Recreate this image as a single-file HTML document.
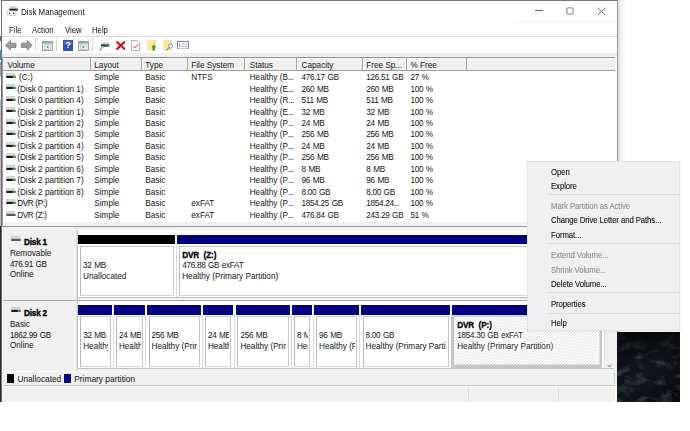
<!DOCTYPE html>
<html><head><meta charset="utf-8"><style>
html,body{margin:0;padding:0}
body{width:690px;height:431px;overflow:hidden;background:#fff;position:relative;font-family:"Liberation Sans", sans-serif}
.a{position:absolute}
.t{position:absolute;white-space:pre;color:#000;font-family:"Liberation Sans", sans-serif;-webkit-text-stroke:0px currentColor}
</style></head><body>
<div class="a" style="left:0px;top:36px;width:1.5px;height:5px;background:#2a7fc4"></div>
<div class="a" style="left:0px;top:50px;width:1.5px;height:10px;background:#3a8ad0"></div>
<div class="a" style="left:0px;top:62px;width:1.5px;height:14px;background:#9aa0a8"></div>
<div class="a" style="left:0px;top:100px;width:1.5px;height:126px;background:#b8bcc2"></div>
<div class="a" style="left:0px;top:226px;width:1.5px;height:176px;background:#22252b"></div>
<div class="a" style="left:1px;top:0px;width:1px;height:402px;background:#6e6e6e"></div>
<div class="a" style="left:1px;top:0px;width:616px;height:1px;background:#7a7a7a"></div>
<div class="a" style="left:617px;top:0px;width:1px;height:402px;background:#999"></div>
<div class="a" style="left:618px;top:0px;width:9px;height:402px;background:linear-gradient(90deg,rgba(0,0,0,0.13),rgba(0,0,0,0.04) 40%,rgba(0,0,0,0))"></div>
<div class="a" style="left:2px;top:1px;width:615px;height:401px;background:#fff"></div>
<div class="a" style="left:615px;top:37px;width:2px;height:365px;background:#fff"></div>
<svg class="a" style="left:7px;top:6px" width="11" height="10" viewBox="0 0 11 10">
<rect x="2.9" y="0.2" width="6.7" height="2" fill="#d0d0d0"/>
<rect x="2.4" y="2.6" width="8.3" height="2.2" fill="#1c2620"/>
<rect x="8.9" y="2.8" width="1.6" height="1.8" fill="#2f6a35"/>
<rect x="0.5" y="5" width="8.4" height="4.6" fill="#fbfbfb" stroke="#b8b8b8" stroke-width="0.6"/>
<circle cx="2.6" cy="7.2" r="0.75" fill="#111"/>
<circle cx="6.7" cy="7.2" r="0.75" fill="#111"/>
</svg>
<div class="t" style="left:20.8px;top:7.00px;font-size:8.7px;line-height:10px;color:#141414;transform:scaleX(0.91);transform-origin:0 0">Disk Management</div>
<div class="a" style="left:535px;top:10.4px;width:7.5px;height:0.8px;background:#666"></div>
<svg class="a" style="left:565.5px;top:7.2px" width="8" height="8" viewBox="0 0 8 8"><rect x="0.9" y="0.9" width="6.2" height="6.2" rx="0.6" fill="none" stroke="#666" stroke-width="0.85"/></svg>
<svg class="a" style="left:597px;top:7px" width="9" height="9" viewBox="0 0 9 9"><path d="M0.8 0.8L8.2 8.2M8.2 0.8L0.8 8.2" stroke="#666" stroke-width="0.85"/></svg>
<div class="a" style="left:513px;top:21px;width:103px;height:1px;background:#f2f2f2"></div>
<div class="t" style="left:9.1px;top:25.00px;font-size:8.6px;line-height:10px;color:#141414;transform:scaleX(0.9);transform-origin:0 0">File</div>
<div class="t" style="left:32.2px;top:25.00px;font-size:8.6px;line-height:10px;color:#141414;transform:scaleX(0.9);transform-origin:0 0">Action</div>
<div class="t" style="left:65.2px;top:25.00px;font-size:8.6px;line-height:10px;color:#141414;transform:scaleX(0.9);transform-origin:0 0">View</div>
<div class="t" style="left:92px;top:25.00px;font-size:8.6px;line-height:10px;color:#141414;transform:scaleX(0.9);transform-origin:0 0">Help</div>
<div class="a" style="left:2px;top:36px;width:615px;height:1px;background:#dcdcdc"></div>
<div class="a" style="left:2px;top:53px;width:615px;height:4px;background:#f0f0f0"></div>

<svg class="a" style="left:5px;top:40px" width="28" height="11" viewBox="0 0 28 11">
 <path d="M0.5 5.3 L5.5 0.5 L5.5 3.3 L11 3.3 L11 7.4 L5.5 7.4 L5.5 10.2 Z" fill="#9c9c9c" stroke="#6e6e6e" stroke-width="0.7" stroke-linejoin="round"/>
 <path d="M27.3 5.3 L22.3 0.5 L22.3 3.3 L16.3 3.3 L16.3 7.4 L22.3 7.4 L22.3 10.2 Z" fill="#9c9c9c" stroke="#6e6e6e" stroke-width="0.7" stroke-linejoin="round"/>
</svg>
<div class="a" style="left:35px;top:38px;width:1px;height:13px;background:#dadada"></div>
<svg class="a" style="left:42px;top:41px" width="11" height="10" viewBox="0 0 11 10">
 <rect x="0.5" y="0.5" width="10" height="9" fill="#e9eef3" stroke="#8a9099" stroke-width="0.8"/>
 <rect x="0.5" y="0.5" width="10" height="2" fill="#9aa3ad"/>
 <rect x="3" y="3.5" width="5.5" height="5" fill="#fff" stroke="#a0a8b0" stroke-width="0.5"/>
 <path d="M4.2 6 L6.5 4.3 L6.5 7.7 Z" fill="#3aa648"/>
</svg>
<div class="a" style="left:56px;top:38px;width:1px;height:13px;background:#dadada"></div>
<svg class="a" style="left:63px;top:39.5px" width="10" height="11" viewBox="0 0 10 11">
 <rect x="0.3" y="0.3" width="9.4" height="10.4" fill="#2f50b8" stroke="#1b2f7a" stroke-width="0.6"/>
 <rect x="1" y="1" width="8" height="4" fill="#5b7fdc" opacity="0.6"/>
 <text x="5" y="8.4" font-family="Liberation Sans" font-size="8.5" font-weight="bold" fill="#fff" text-anchor="middle">?</text>
</svg>
<svg class="a" style="left:78px;top:41px" width="11" height="10" viewBox="0 0 11 10">
 <rect x="0.5" y="0.5" width="10" height="9" fill="#e9eef3" stroke="#8a9099" stroke-width="0.8"/>
 <rect x="0.5" y="0.5" width="10" height="2" fill="#9aa3ad"/>
 <rect x="2.5" y="3.5" width="5.5" height="5" fill="#fff" stroke="#a0a8b0" stroke-width="0.5"/>
 <path d="M6.8 6 L4.5 4.3 L4.5 7.7 Z" fill="#3aa648"/>
</svg>
<div class="a" style="left:92px;top:38px;width:1px;height:13px;background:#dadada"></div>
<svg class="a" style="left:99px;top:41.5px" width="11" height="9.5" viewBox="0 0 11 9.5">
 <rect x="2.5" y="0.3" width="7.5" height="2" fill="#cfd6dc"/>
 <rect x="2" y="2.2" width="8.3" height="2.6" fill="#2f4a56"/>
 <rect x="7.6" y="2.5" width="2.4" height="2" fill="#2c9a3c"/>
 <path d="M3.6 4.6 L0.8 8.8" stroke="#7f98a8" stroke-width="1.2"/>
 <rect x="2.4" y="4.3" width="2.4" height="1.6" fill="#aac4d4"/>
</svg>
<svg class="a" style="left:115.5px;top:40.5px" width="9.5" height="9" viewBox="0 0 9.5 9">
 <path d="M1.3 1.2 L8.2 7.8 M8.2 1.2 L1.3 7.8" stroke="#c8101a" stroke-width="2.1" stroke-linecap="square"/>
</svg>
<svg class="a" style="left:131px;top:39.5px" width="9" height="11" viewBox="0 0 9 11">
 <path d="M0.5 0.5 H6 L8.5 3 V10.5 H0.5 Z" fill="#fafafa" stroke="#9a9a9a" stroke-width="0.7"/>
 <path d="M2 6.3 L3.6 8 L7 4.2" stroke="#e04a2a" stroke-width="1" fill="none"/>
</svg>
<svg class="a" style="left:147px;top:39.8px" width="10" height="11" viewBox="0 0 10 11">
 <rect x="0.2" y="0.2" width="8.2" height="10.4" fill="#fbe49a"/>
 <rect x="7.4" y="0.2" width="1" height="10.4" fill="#e8cf7a"/>
 <path d="M6.7 4.8 L4.3 7.2 H5.6 V10.4 H7.8 V7.2 H9.2 Z" fill="#1f9a2a"/>
</svg>
<svg class="a" style="left:162.6px;top:39.8px" width="11" height="11" viewBox="0 0 11 11">
 <rect x="0.2" y="0.2" width="8.2" height="10.4" fill="#fbe49a"/>
 <rect x="7.4" y="0.2" width="1" height="10.4" fill="#e8cf7a"/>
 <circle cx="7.6" cy="6" r="2.1" fill="#e6f0f8" stroke="#7f9cb0" stroke-width="0.9"/>
 <path d="M6 7.6 L3.2 10.5" stroke="#555" stroke-width="1"/>
</svg>
<svg class="a" style="left:176.5px;top:40.8px" width="12" height="8.5" viewBox="0 0 12 8.5">
 <rect x="0.5" y="0.5" width="11" height="7.5" fill="#fdfdfd" stroke="#707880" stroke-width="0.9"/>
 <path d="M2.3 2.3 L3.2 3.4 L2.4 4.8 L3.4 6" stroke="#4a86c0" stroke-width="0.8" fill="none"/>
 <rect x="5" y="2.6" width="5" height="0.8" fill="#9aa2aa"/>
 <rect x="5" y="5" width="5" height="0.8" fill="#9aa2aa"/>
</svg>

<div class="a" style="left:2px;top:57px;width:613px;height:1px;background:#8c8c8c"></div>
<div class="a" style="left:2px;top:57px;width:1px;height:170px;background:#9a9a9a"></div>
<div class="a" style="left:3px;top:58px;width:612px;height:12px;background:#f0f0f0"></div>
<div class="a" style="left:3px;top:70px;width:612px;height:1px;background:#9a9a9a"></div>
<div class="a" style="left:3px;top:58px;width:612px;height:1px;background:#fcfcfc"></div>
<div class="a" style="left:90px;top:58px;width:1px;height:12px;background:#a4a4a4"></div>
<div class="a" style="left:91px;top:58px;width:1px;height:12px;background:#fcfcfc"></div>
<div class="a" style="left:141px;top:58px;width:1px;height:12px;background:#a4a4a4"></div>
<div class="a" style="left:142px;top:58px;width:1px;height:12px;background:#fcfcfc"></div>
<div class="a" style="left:187px;top:58px;width:1px;height:12px;background:#a4a4a4"></div>
<div class="a" style="left:188px;top:58px;width:1px;height:12px;background:#fcfcfc"></div>
<div class="a" style="left:244px;top:58px;width:1px;height:12px;background:#a4a4a4"></div>
<div class="a" style="left:245px;top:58px;width:1px;height:12px;background:#fcfcfc"></div>
<div class="a" style="left:296px;top:58px;width:1px;height:12px;background:#a4a4a4"></div>
<div class="a" style="left:297px;top:58px;width:1px;height:12px;background:#fcfcfc"></div>
<div class="a" style="left:362px;top:58px;width:1px;height:12px;background:#a4a4a4"></div>
<div class="a" style="left:363px;top:58px;width:1px;height:12px;background:#fcfcfc"></div>
<div class="a" style="left:406px;top:58px;width:1px;height:12px;background:#a4a4a4"></div>
<div class="a" style="left:407px;top:58px;width:1px;height:12px;background:#fcfcfc"></div>
<div class="a" style="left:466px;top:58px;width:1px;height:12px;background:#a4a4a4"></div>
<div class="a" style="left:467px;top:58px;width:1px;height:12px;background:#fcfcfc"></div>
<div class="t" style="left:7.4px;top:60.99px;font-size:8.2px;line-height:10px;color:#141414">Volume</div>
<div class="t" style="left:94.3px;top:60.99px;font-size:8.2px;line-height:10px;color:#141414">Layout</div>
<div class="t" style="left:145.3px;top:60.99px;font-size:8.2px;line-height:10px;color:#141414">Type</div>
<div class="t" style="left:191.3px;top:60.99px;font-size:8.2px;line-height:10px;color:#141414">File System</div>
<div class="t" style="left:249.7px;top:60.99px;font-size:8.2px;line-height:10px;color:#141414">Status</div>
<div class="t" style="left:301.6px;top:60.99px;font-size:8.2px;line-height:10px;color:#141414">Capacity</div>
<div class="t" style="left:366.3px;top:60.99px;font-size:8.2px;line-height:10px;color:#141414">Free Sp...</div>
<div class="t" style="left:410.4px;top:60.99px;font-size:8.2px;line-height:10px;color:#141414">% Free</div>
<div class="a" style="left:16.3px;top:198.3px;width:31.5px;height:10.2px;background:#f3f3f3"></div>
<svg class="a" style="left:5.5px;top:73.00px" width="10" height="6" viewBox="0 0 10 6"><rect x="0.5" y="0.4" width="8.2" height="2.4" fill="#dadde1" stroke="#b4b9bf" stroke-width="0.5"/><rect x="0.3" y="2.9" width="9.2" height="2.1" fill="#1a1a1a"/><rect x="7" y="3.1" width="2.2" height="1.7" fill="#168a2a" stroke="#6cc86c" stroke-width="0.4"/></svg>
<div class="t" style="left:19.1px;top:73.09px;font-size:8.2px;line-height:10px;color:#141414">(C:)</div>
<div class="t" style="left:94.3px;top:73.09px;font-size:8.2px;line-height:10px;color:#141414">Simple</div>
<div class="t" style="left:145.3px;top:73.09px;font-size:8.2px;line-height:10px;color:#141414">Basic</div>
<div class="t" style="left:191.3px;top:73.09px;font-size:8.2px;line-height:10px;color:#141414">NTFS</div>
<div class="t" style="left:249.7px;top:73.09px;font-size:8.2px;line-height:10px;color:#141414">Healthy (B<span style="letter-spacing:-0.5px">...</span></div>
<div class="t" style="left:301.6px;top:73.09px;font-size:8.2px;line-height:10px;color:#141414;letter-spacing:-0.3px;word-spacing:0.6px">476.17 GB</div>
<div class="t" style="left:366.3px;top:73.09px;font-size:8.2px;line-height:10px;color:#141414;letter-spacing:-0.3px;word-spacing:0.6px">126.51 GB</div>
<div class="t" style="left:410.4px;top:73.09px;font-size:8.2px;line-height:10px;color:#141414;letter-spacing:-0.3px;word-spacing:0.6px">27 %</div>
<svg class="a" style="left:5.5px;top:84.47px" width="10" height="6" viewBox="0 0 10 6"><rect x="0.5" y="0.4" width="8.2" height="2.4" fill="#dadde1" stroke="#b4b9bf" stroke-width="0.5"/><rect x="0.3" y="2.9" width="9.2" height="2.1" fill="#1a1a1a"/><rect x="7" y="3.1" width="2.2" height="1.7" fill="#168a2a" stroke="#6cc86c" stroke-width="0.4"/></svg>
<div class="t" style="left:17.2px;top:84.56px;font-size:8.2px;line-height:10px;color:#141414">(Disk 0 partition 1)</div>
<div class="t" style="left:94.3px;top:84.56px;font-size:8.2px;line-height:10px;color:#141414">Simple</div>
<div class="t" style="left:145.3px;top:84.56px;font-size:8.2px;line-height:10px;color:#141414">Basic</div>
<div class="t" style="left:249.7px;top:84.56px;font-size:8.2px;line-height:10px;color:#141414">Healthy (E<span style="letter-spacing:-0.5px">...</span></div>
<div class="t" style="left:301.6px;top:84.56px;font-size:8.2px;line-height:10px;color:#141414;letter-spacing:-0.3px;word-spacing:0.6px">260 MB</div>
<div class="t" style="left:366.3px;top:84.56px;font-size:8.2px;line-height:10px;color:#141414;letter-spacing:-0.3px;word-spacing:0.6px">260 MB</div>
<div class="t" style="left:410.4px;top:84.56px;font-size:8.2px;line-height:10px;color:#141414;letter-spacing:-0.3px;word-spacing:0.6px">100 %</div>
<svg class="a" style="left:5.5px;top:95.94px" width="10" height="6" viewBox="0 0 10 6"><rect x="0.5" y="0.4" width="8.2" height="2.4" fill="#dadde1" stroke="#b4b9bf" stroke-width="0.5"/><rect x="0.3" y="2.9" width="9.2" height="2.1" fill="#1a1a1a"/><rect x="7" y="3.1" width="2.2" height="1.7" fill="#168a2a" stroke="#6cc86c" stroke-width="0.4"/></svg>
<div class="t" style="left:17.2px;top:96.03px;font-size:8.2px;line-height:10px;color:#141414">(Disk 0 partition 4)</div>
<div class="t" style="left:94.3px;top:96.03px;font-size:8.2px;line-height:10px;color:#141414">Simple</div>
<div class="t" style="left:145.3px;top:96.03px;font-size:8.2px;line-height:10px;color:#141414">Basic</div>
<div class="t" style="left:249.7px;top:96.03px;font-size:8.2px;line-height:10px;color:#141414">Healthy (R<span style="letter-spacing:-0.5px">...</span></div>
<div class="t" style="left:301.6px;top:96.03px;font-size:8.2px;line-height:10px;color:#141414;letter-spacing:-0.3px;word-spacing:0.6px">511 MB</div>
<div class="t" style="left:366.3px;top:96.03px;font-size:8.2px;line-height:10px;color:#141414;letter-spacing:-0.3px;word-spacing:0.6px">511 MB</div>
<div class="t" style="left:410.4px;top:96.03px;font-size:8.2px;line-height:10px;color:#141414;letter-spacing:-0.3px;word-spacing:0.6px">100 %</div>
<svg class="a" style="left:5.5px;top:107.41px" width="10" height="6" viewBox="0 0 10 6"><rect x="0.5" y="0.4" width="8.2" height="2.4" fill="#dadde1" stroke="#b4b9bf" stroke-width="0.5"/><rect x="0.3" y="2.9" width="9.2" height="2.1" fill="#1a1a1a"/><rect x="7" y="3.1" width="2.2" height="1.7" fill="#168a2a" stroke="#6cc86c" stroke-width="0.4"/></svg>
<div class="t" style="left:17.2px;top:107.50px;font-size:8.2px;line-height:10px;color:#141414">(Disk 2 partition 1)</div>
<div class="t" style="left:94.3px;top:107.50px;font-size:8.2px;line-height:10px;color:#141414">Simple</div>
<div class="t" style="left:145.3px;top:107.50px;font-size:8.2px;line-height:10px;color:#141414">Basic</div>
<div class="t" style="left:249.7px;top:107.50px;font-size:8.2px;line-height:10px;color:#141414">Healthy (E<span style="letter-spacing:-0.5px">...</span></div>
<div class="t" style="left:301.6px;top:107.50px;font-size:8.2px;line-height:10px;color:#141414;letter-spacing:-0.3px;word-spacing:0.6px">32 MB</div>
<div class="t" style="left:366.3px;top:107.50px;font-size:8.2px;line-height:10px;color:#141414;letter-spacing:-0.3px;word-spacing:0.6px">32 MB</div>
<div class="t" style="left:410.4px;top:107.50px;font-size:8.2px;line-height:10px;color:#141414;letter-spacing:-0.3px;word-spacing:0.6px">100 %</div>
<svg class="a" style="left:5.5px;top:118.88px" width="10" height="6" viewBox="0 0 10 6"><rect x="0.5" y="0.4" width="8.2" height="2.4" fill="#dadde1" stroke="#b4b9bf" stroke-width="0.5"/><rect x="0.3" y="2.9" width="9.2" height="2.1" fill="#1a1a1a"/><rect x="7" y="3.1" width="2.2" height="1.7" fill="#168a2a" stroke="#6cc86c" stroke-width="0.4"/></svg>
<div class="t" style="left:17.2px;top:118.97px;font-size:8.2px;line-height:10px;color:#141414">(Disk 2 partition 2)</div>
<div class="t" style="left:94.3px;top:118.97px;font-size:8.2px;line-height:10px;color:#141414">Simple</div>
<div class="t" style="left:145.3px;top:118.97px;font-size:8.2px;line-height:10px;color:#141414">Basic</div>
<div class="t" style="left:249.7px;top:118.97px;font-size:8.2px;line-height:10px;color:#141414">Healthy (P<span style="letter-spacing:-0.5px">...</span></div>
<div class="t" style="left:301.6px;top:118.97px;font-size:8.2px;line-height:10px;color:#141414;letter-spacing:-0.3px;word-spacing:0.6px">24 MB</div>
<div class="t" style="left:366.3px;top:118.97px;font-size:8.2px;line-height:10px;color:#141414;letter-spacing:-0.3px;word-spacing:0.6px">24 MB</div>
<div class="t" style="left:410.4px;top:118.97px;font-size:8.2px;line-height:10px;color:#141414;letter-spacing:-0.3px;word-spacing:0.6px">100 %</div>
<svg class="a" style="left:5.5px;top:130.35px" width="10" height="6" viewBox="0 0 10 6"><rect x="0.5" y="0.4" width="8.2" height="2.4" fill="#dadde1" stroke="#b4b9bf" stroke-width="0.5"/><rect x="0.3" y="2.9" width="9.2" height="2.1" fill="#1a1a1a"/><rect x="7" y="3.1" width="2.2" height="1.7" fill="#168a2a" stroke="#6cc86c" stroke-width="0.4"/></svg>
<div class="t" style="left:17.2px;top:130.44px;font-size:8.2px;line-height:10px;color:#141414">(Disk 2 partition 3)</div>
<div class="t" style="left:94.3px;top:130.44px;font-size:8.2px;line-height:10px;color:#141414">Simple</div>
<div class="t" style="left:145.3px;top:130.44px;font-size:8.2px;line-height:10px;color:#141414">Basic</div>
<div class="t" style="left:249.7px;top:130.44px;font-size:8.2px;line-height:10px;color:#141414">Healthy (P<span style="letter-spacing:-0.5px">...</span></div>
<div class="t" style="left:301.6px;top:130.44px;font-size:8.2px;line-height:10px;color:#141414;letter-spacing:-0.3px;word-spacing:0.6px">256 MB</div>
<div class="t" style="left:366.3px;top:130.44px;font-size:8.2px;line-height:10px;color:#141414;letter-spacing:-0.3px;word-spacing:0.6px">256 MB</div>
<div class="t" style="left:410.4px;top:130.44px;font-size:8.2px;line-height:10px;color:#141414;letter-spacing:-0.3px;word-spacing:0.6px">100 %</div>
<svg class="a" style="left:5.5px;top:141.82px" width="10" height="6" viewBox="0 0 10 6"><rect x="0.5" y="0.4" width="8.2" height="2.4" fill="#dadde1" stroke="#b4b9bf" stroke-width="0.5"/><rect x="0.3" y="2.9" width="9.2" height="2.1" fill="#1a1a1a"/><rect x="7" y="3.1" width="2.2" height="1.7" fill="#168a2a" stroke="#6cc86c" stroke-width="0.4"/></svg>
<div class="t" style="left:17.2px;top:141.91px;font-size:8.2px;line-height:10px;color:#141414">(Disk 2 partition 4)</div>
<div class="t" style="left:94.3px;top:141.91px;font-size:8.2px;line-height:10px;color:#141414">Simple</div>
<div class="t" style="left:145.3px;top:141.91px;font-size:8.2px;line-height:10px;color:#141414">Basic</div>
<div class="t" style="left:249.7px;top:141.91px;font-size:8.2px;line-height:10px;color:#141414">Healthy (P<span style="letter-spacing:-0.5px">...</span></div>
<div class="t" style="left:301.6px;top:141.91px;font-size:8.2px;line-height:10px;color:#141414;letter-spacing:-0.3px;word-spacing:0.6px">24 MB</div>
<div class="t" style="left:366.3px;top:141.91px;font-size:8.2px;line-height:10px;color:#141414;letter-spacing:-0.3px;word-spacing:0.6px">24 MB</div>
<div class="t" style="left:410.4px;top:141.91px;font-size:8.2px;line-height:10px;color:#141414;letter-spacing:-0.3px;word-spacing:0.6px">100 %</div>
<svg class="a" style="left:5.5px;top:153.29px" width="10" height="6" viewBox="0 0 10 6"><rect x="0.5" y="0.4" width="8.2" height="2.4" fill="#dadde1" stroke="#b4b9bf" stroke-width="0.5"/><rect x="0.3" y="2.9" width="9.2" height="2.1" fill="#1a1a1a"/><rect x="7" y="3.1" width="2.2" height="1.7" fill="#168a2a" stroke="#6cc86c" stroke-width="0.4"/></svg>
<div class="t" style="left:17.2px;top:153.38px;font-size:8.2px;line-height:10px;color:#141414">(Disk 2 partition 5)</div>
<div class="t" style="left:94.3px;top:153.38px;font-size:8.2px;line-height:10px;color:#141414">Simple</div>
<div class="t" style="left:145.3px;top:153.38px;font-size:8.2px;line-height:10px;color:#141414">Basic</div>
<div class="t" style="left:249.7px;top:153.38px;font-size:8.2px;line-height:10px;color:#141414">Healthy (P<span style="letter-spacing:-0.5px">...</span></div>
<div class="t" style="left:301.6px;top:153.38px;font-size:8.2px;line-height:10px;color:#141414;letter-spacing:-0.3px;word-spacing:0.6px">256 MB</div>
<div class="t" style="left:366.3px;top:153.38px;font-size:8.2px;line-height:10px;color:#141414;letter-spacing:-0.3px;word-spacing:0.6px">256 MB</div>
<div class="t" style="left:410.4px;top:153.38px;font-size:8.2px;line-height:10px;color:#141414;letter-spacing:-0.3px;word-spacing:0.6px">100 %</div>
<svg class="a" style="left:5.5px;top:164.76px" width="10" height="6" viewBox="0 0 10 6"><rect x="0.5" y="0.4" width="8.2" height="2.4" fill="#dadde1" stroke="#b4b9bf" stroke-width="0.5"/><rect x="0.3" y="2.9" width="9.2" height="2.1" fill="#1a1a1a"/><rect x="7" y="3.1" width="2.2" height="1.7" fill="#168a2a" stroke="#6cc86c" stroke-width="0.4"/></svg>
<div class="t" style="left:17.2px;top:164.85px;font-size:8.2px;line-height:10px;color:#141414">(Disk 2 partition 6)</div>
<div class="t" style="left:94.3px;top:164.85px;font-size:8.2px;line-height:10px;color:#141414">Simple</div>
<div class="t" style="left:145.3px;top:164.85px;font-size:8.2px;line-height:10px;color:#141414">Basic</div>
<div class="t" style="left:249.7px;top:164.85px;font-size:8.2px;line-height:10px;color:#141414">Healthy (P<span style="letter-spacing:-0.5px">...</span></div>
<div class="t" style="left:301.6px;top:164.85px;font-size:8.2px;line-height:10px;color:#141414;letter-spacing:-0.3px;word-spacing:0.6px">8 MB</div>
<div class="t" style="left:366.3px;top:164.85px;font-size:8.2px;line-height:10px;color:#141414;letter-spacing:-0.3px;word-spacing:0.6px">8 MB</div>
<div class="t" style="left:410.4px;top:164.85px;font-size:8.2px;line-height:10px;color:#141414;letter-spacing:-0.3px;word-spacing:0.6px">100 %</div>
<svg class="a" style="left:5.5px;top:176.23px" width="10" height="6" viewBox="0 0 10 6"><rect x="0.5" y="0.4" width="8.2" height="2.4" fill="#dadde1" stroke="#b4b9bf" stroke-width="0.5"/><rect x="0.3" y="2.9" width="9.2" height="2.1" fill="#1a1a1a"/><rect x="7" y="3.1" width="2.2" height="1.7" fill="#168a2a" stroke="#6cc86c" stroke-width="0.4"/></svg>
<div class="t" style="left:17.2px;top:176.32px;font-size:8.2px;line-height:10px;color:#141414">(Disk 2 partition 7)</div>
<div class="t" style="left:94.3px;top:176.32px;font-size:8.2px;line-height:10px;color:#141414">Simple</div>
<div class="t" style="left:145.3px;top:176.32px;font-size:8.2px;line-height:10px;color:#141414">Basic</div>
<div class="t" style="left:249.7px;top:176.32px;font-size:8.2px;line-height:10px;color:#141414">Healthy (P<span style="letter-spacing:-0.5px">...</span></div>
<div class="t" style="left:301.6px;top:176.32px;font-size:8.2px;line-height:10px;color:#141414;letter-spacing:-0.3px;word-spacing:0.6px">96 MB</div>
<div class="t" style="left:366.3px;top:176.32px;font-size:8.2px;line-height:10px;color:#141414;letter-spacing:-0.3px;word-spacing:0.6px">96 MB</div>
<div class="t" style="left:410.4px;top:176.32px;font-size:8.2px;line-height:10px;color:#141414;letter-spacing:-0.3px;word-spacing:0.6px">100 %</div>
<svg class="a" style="left:5.5px;top:187.70px" width="10" height="6" viewBox="0 0 10 6"><rect x="0.5" y="0.4" width="8.2" height="2.4" fill="#dadde1" stroke="#b4b9bf" stroke-width="0.5"/><rect x="0.3" y="2.9" width="9.2" height="2.1" fill="#1a1a1a"/><rect x="7" y="3.1" width="2.2" height="1.7" fill="#168a2a" stroke="#6cc86c" stroke-width="0.4"/></svg>
<div class="t" style="left:17.2px;top:187.79px;font-size:8.2px;line-height:10px;color:#141414">(Disk 2 partition 8)</div>
<div class="t" style="left:94.3px;top:187.79px;font-size:8.2px;line-height:10px;color:#141414">Simple</div>
<div class="t" style="left:145.3px;top:187.79px;font-size:8.2px;line-height:10px;color:#141414">Basic</div>
<div class="t" style="left:249.7px;top:187.79px;font-size:8.2px;line-height:10px;color:#141414">Healthy (P<span style="letter-spacing:-0.5px">...</span></div>
<div class="t" style="left:301.6px;top:187.79px;font-size:8.2px;line-height:10px;color:#141414;letter-spacing:-0.3px;word-spacing:0.6px">8.00 GB</div>
<div class="t" style="left:366.3px;top:187.79px;font-size:8.2px;line-height:10px;color:#141414;letter-spacing:-0.3px;word-spacing:0.6px">8.00 GB</div>
<div class="t" style="left:410.4px;top:187.79px;font-size:8.2px;line-height:10px;color:#141414;letter-spacing:-0.3px;word-spacing:0.6px">100 %</div>
<svg class="a" style="left:5.5px;top:199.17px" width="10" height="6" viewBox="0 0 10 6"><rect x="0.5" y="0.4" width="8.2" height="2.4" fill="#dadde1" stroke="#b4b9bf" stroke-width="0.5"/><rect x="0.3" y="2.9" width="9.2" height="2.1" fill="#1a1a1a"/><rect x="7" y="3.1" width="2.2" height="1.7" fill="#168a2a" stroke="#6cc86c" stroke-width="0.4"/></svg>
<div class="t" style="left:17.2px;top:199.26px;font-size:8.2px;line-height:10px;color:#141414;letter-spacing:-0.35px">DVR (P:)</div>
<div class="t" style="left:94.3px;top:199.26px;font-size:8.2px;line-height:10px;color:#141414">Simple</div>
<div class="t" style="left:145.3px;top:199.26px;font-size:8.2px;line-height:10px;color:#141414">Basic</div>
<div class="t" style="left:191.3px;top:199.26px;font-size:8.2px;line-height:10px;color:#141414">exFAT</div>
<div class="t" style="left:249.7px;top:199.26px;font-size:8.2px;line-height:10px;color:#141414">Healthy (P<span style="letter-spacing:-0.5px">...</span></div>
<div class="t" style="left:301.6px;top:199.26px;font-size:8.2px;line-height:10px;color:#141414;letter-spacing:-0.3px;word-spacing:0.6px">1854.25 GB</div>
<div class="t" style="left:366.3px;top:199.26px;font-size:8.2px;line-height:10px;color:#141414;letter-spacing:-0.3px;word-spacing:0.6px">1854.24<span style="letter-spacing:-0.5px">...</span></div>
<div class="t" style="left:410.4px;top:199.26px;font-size:8.2px;line-height:10px;color:#141414;letter-spacing:-0.3px;word-spacing:0.6px">100 %</div>
<svg class="a" style="left:5.5px;top:210.64px" width="10" height="6" viewBox="0 0 10 6"><rect x="0.5" y="0.4" width="8.2" height="2.4" fill="#dadde1" stroke="#b4b9bf" stroke-width="0.5"/><rect x="0.3" y="2.9" width="9.2" height="2.1" fill="#555"/></svg>
<div class="t" style="left:17.2px;top:210.73px;font-size:8.2px;line-height:10px;color:#141414;letter-spacing:-0.35px">DVR (Z:)</div>
<div class="t" style="left:94.3px;top:210.73px;font-size:8.2px;line-height:10px;color:#141414">Simple</div>
<div class="t" style="left:145.3px;top:210.73px;font-size:8.2px;line-height:10px;color:#141414">Basic</div>
<div class="t" style="left:191.3px;top:210.73px;font-size:8.2px;line-height:10px;color:#141414">exFAT</div>
<div class="t" style="left:249.7px;top:210.73px;font-size:8.2px;line-height:10px;color:#141414">Healthy (P<span style="letter-spacing:-0.5px">...</span></div>
<div class="t" style="left:301.6px;top:210.73px;font-size:8.2px;line-height:10px;color:#141414;letter-spacing:-0.3px;word-spacing:0.6px">476.84 GB</div>
<div class="t" style="left:366.3px;top:210.73px;font-size:8.2px;line-height:10px;color:#141414;letter-spacing:-0.3px;word-spacing:0.6px">243.29 GB</div>
<div class="t" style="left:410.4px;top:210.73px;font-size:8.2px;line-height:10px;color:#141414;letter-spacing:-0.3px;word-spacing:0.6px">51 %</div>
<div class="a" style="left:3.5px;top:221.8px;width:613.5px;height:4.4px;background:#f0f0f0"></div>
<div class="a" style="left:2.5px;top:226px;width:614.5px;height:1px;background:#9c9c9c"></div>
<div class="a" style="left:2.5px;top:227px;width:614.5px;height:175px;background:#f0f0f0"></div>
<div class="a" style="left:3px;top:227px;width:73.3px;height:72.5px;background:#f0f0f0"></div>
<div class="a" style="left:77.4px;top:230px;width:1px;height:70px;background:#c8c8c8"></div>
<div class="a" style="left:78.4px;top:230px;width:536px;height:67.4px;background:#fff"></div>
<div class="a" style="left:78.4px;top:297.4px;width:536px;height:1px;background:#bdbdbd"></div>
<div class="a" style="left:3px;top:299.7px;width:611px;height:1px;background:#a8a8a8"></div>
<div class="a" style="left:77.4px;top:301px;width:1px;height:70px;background:#c8c8c8"></div>
<div class="a" style="left:78.4px;top:301px;width:536px;height:67px;background:#fff"></div>
<div class="a" style="left:78.4px;top:368px;width:536px;height:1px;background:#bdbdbd"></div>
<div class="a" style="left:3px;top:370.5px;width:611px;height:1px;background:#a8a8a8"></div>
<div class="a" style="left:76.3px;top:227px;width:1px;height:144px;background:#e0e0e0"></div>
<svg class="a" style="left:11.2px;top:236.3px" width="10" height="6" viewBox="0 0 10 6"><rect x="0.5" y="0.4" width="8.2" height="2.4" fill="#dadde1" stroke="#b4b9bf" stroke-width="0.5"/><rect x="0.3" y="2.9" width="9.2" height="2.1" fill="#5a5a5a"/></svg>
<div class="t" style="left:24px;top:238.09px;font-size:8.2px;line-height:10px;font-weight:bold;color:#000;letter-spacing:-0.2px;-webkit-text-stroke:0.35px #000">Disk 1</div>
<div class="t" style="left:9.9px;top:249.29px;font-size:8.2px;line-height:10px;color:#141414">Removable</div>
<div class="t" style="left:9.9px;top:260.09px;font-size:8.2px;line-height:10px;color:#141414;letter-spacing:-0.35px;word-spacing:0.8px">476.91 GB</div>
<div class="t" style="left:9.9px;top:270.09px;font-size:8.2px;line-height:10px;color:#141414">Online</div>
<svg class="a" style="left:11.2px;top:306.5px" width="10" height="6" viewBox="0 0 10 6"><rect x="0.5" y="0.4" width="8.2" height="2.4" fill="#dadde1" stroke="#b4b9bf" stroke-width="0.5"/><rect x="0.3" y="2.9" width="9.2" height="2.1" fill="#1a1a1a"/><rect x="7" y="3.1" width="2.2" height="1.7" fill="#168a2a" stroke="#6cc86c" stroke-width="0.4"/></svg>
<div class="t" style="left:24px;top:308.99px;font-size:8.2px;line-height:10px;font-weight:bold;color:#000;letter-spacing:-0.2px;-webkit-text-stroke:0.35px #000">Disk 2</div>
<div class="t" style="left:9.9px;top:319.99px;font-size:8.2px;line-height:10px;color:#141414">Basic</div>
<div class="t" style="left:9.9px;top:330.99px;font-size:8.2px;line-height:10px;color:#141414;letter-spacing:-0.35px;word-spacing:0.8px">1862.99 GB</div>
<div class="t" style="left:9.9px;top:340.99px;font-size:8.2px;line-height:10px;color:#141414">Online</div>
<div class="a" style="left:78.2px;top:234.5px;width:96.99999999999999px;height:9.8px;background:#000"></div>
<div class="a" style="left:80.10000000000001px;top:245.8px;width:93.69999999999997px;height:50.599999999999966px;box-sizing:border-box;border-left:1px solid #b8b8b8;border-top:1px solid #c8c8c8;border-right:1px solid #c8c8c8;border-bottom:1px solid #d4d4d4"></div>
<div class="t" style="left:83.10000000000001px;top:260.99px;font-size:8.2px;line-height:10px;color:#141414;overflow:hidden;width:88.4px;letter-spacing:-0.3px;word-spacing:0.6px;">32 MB</div>
<div class="t" style="left:83.10000000000001px;top:271.79px;font-size:8.2px;line-height:10px;color:#141414;overflow:hidden;width:88.4px;">Unallocated</div>
<div class="a" style="left:177.3px;top:234.5px;width:423.2px;height:9.8px;background:#000080"></div>
<div class="a" style="left:175.8px;top:244.5px;width:1px;height:52.89999999999998px;background:#dadada"></div>
<div class="a" style="left:179.20000000000002px;top:245.8px;width:419.9px;height:50.599999999999966px;box-sizing:border-box;border-left:1px solid #b8b8b8;border-top:1px solid #c8c8c8;border-right:1px solid #c8c8c8;border-bottom:1px solid #d4d4d4"></div>
<div class="t" style="left:182.20000000000002px;top:250.89px;font-size:8.2px;line-height:10px;color:#141414;overflow:hidden;width:414.6px;font-weight:bold;color:#000;-webkit-text-stroke:0.3px #000;letter-spacing:-0.1px;">DVR&nbsp; (Z:)</div>
<div class="t" style="left:182.20000000000002px;top:261.39px;font-size:8.2px;line-height:10px;color:#141414;overflow:hidden;width:414.6px;letter-spacing:-0.3px;word-spacing:0.6px;">476.88 GB exFAT</div>
<div class="t" style="left:182.20000000000002px;top:271.89px;font-size:8.2px;line-height:10px;color:#141414;overflow:hidden;width:414.6px;">Healthy (Primary Partition)</div>
<div class="a" style="left:78.3px;top:305.1px;width:33.900000000000006px;height:9.8px;background:#000080"></div>
<div class="a" style="left:80.2px;top:316.3px;width:30.599999999999994px;height:50.39999999999998px;box-sizing:border-box;border-left:1px solid #b8b8b8;border-top:1px solid #c8c8c8;border-right:1px solid #c8c8c8;border-bottom:1px solid #d4d4d4"></div>
<div class="t" style="left:83.2px;top:331.49px;font-size:8.2px;line-height:10px;color:#141414;overflow:hidden;width:25.3px;letter-spacing:-0.3px;word-spacing:0.6px;">32 MB</div>
<div class="t" style="left:83.2px;top:342.29px;font-size:8.2px;line-height:10px;color:#141414;overflow:hidden;width:25.3px;">Healthy (Primary Partition)</div>
<div class="a" style="left:114px;top:305.1px;width:30.80000000000001px;height:9.8px;background:#000080"></div>
<div class="a" style="left:112.5px;top:315.1px;width:1px;height:52.599999999999966px;background:#dadada"></div>
<div class="a" style="left:115.9px;top:316.3px;width:27.5px;height:50.39999999999998px;box-sizing:border-box;border-left:1px solid #b8b8b8;border-top:1px solid #c8c8c8;border-right:1px solid #c8c8c8;border-bottom:1px solid #d4d4d4"></div>
<div class="t" style="left:118.9px;top:331.49px;font-size:8.2px;line-height:10px;color:#141414;overflow:hidden;width:22.2px;letter-spacing:-0.3px;word-spacing:0.6px;">24 MB</div>
<div class="t" style="left:118.9px;top:342.29px;font-size:8.2px;line-height:10px;color:#141414;overflow:hidden;width:22.2px;">Healthy (Primary Partition)</div>
<div class="a" style="left:146.6px;top:305.1px;width:54.30000000000001px;height:9.8px;background:#000080"></div>
<div class="a" style="left:145.1px;top:315.1px;width:1px;height:52.599999999999966px;background:#dadada"></div>
<div class="a" style="left:148.5px;top:316.3px;width:51.0px;height:50.39999999999998px;box-sizing:border-box;border-left:1px solid #b8b8b8;border-top:1px solid #c8c8c8;border-right:1px solid #c8c8c8;border-bottom:1px solid #d4d4d4"></div>
<div class="t" style="left:151.5px;top:331.49px;font-size:8.2px;line-height:10px;color:#141414;overflow:hidden;width:45.7px;letter-spacing:-0.3px;word-spacing:0.6px;">256 MB</div>
<div class="t" style="left:151.5px;top:342.29px;font-size:8.2px;line-height:10px;color:#141414;overflow:hidden;width:45.7px;">Healthy (Primary Partition)</div>
<div class="a" style="left:203px;top:305.1px;width:29.80000000000001px;height:9.8px;background:#000080"></div>
<div class="a" style="left:201.5px;top:315.1px;width:1px;height:52.599999999999966px;background:#dadada"></div>
<div class="a" style="left:204.9px;top:316.3px;width:26.5px;height:50.39999999999998px;box-sizing:border-box;border-left:1px solid #b8b8b8;border-top:1px solid #c8c8c8;border-right:1px solid #c8c8c8;border-bottom:1px solid #d4d4d4"></div>
<div class="t" style="left:207.9px;top:331.49px;font-size:8.2px;line-height:10px;color:#141414;overflow:hidden;width:21.2px;letter-spacing:-0.3px;word-spacing:0.6px;">24 MB</div>
<div class="t" style="left:207.9px;top:342.29px;font-size:8.2px;line-height:10px;color:#141414;overflow:hidden;width:21.2px;">Healthy (Primary Partition)</div>
<div class="a" style="left:235.5px;top:305.1px;width:54.69999999999999px;height:9.8px;background:#000080"></div>
<div class="a" style="left:234.0px;top:315.1px;width:1px;height:52.599999999999966px;background:#dadada"></div>
<div class="a" style="left:237.4px;top:316.3px;width:51.400000000000006px;height:50.39999999999998px;box-sizing:border-box;border-left:1px solid #b8b8b8;border-top:1px solid #c8c8c8;border-right:1px solid #c8c8c8;border-bottom:1px solid #d4d4d4"></div>
<div class="t" style="left:240.4px;top:331.49px;font-size:8.2px;line-height:10px;color:#141414;overflow:hidden;width:46.1px;letter-spacing:-0.3px;word-spacing:0.6px;">256 MB</div>
<div class="t" style="left:240.4px;top:342.29px;font-size:8.2px;line-height:10px;color:#141414;overflow:hidden;width:46.1px;">Healthy (Primary Partition)</div>
<div class="a" style="left:292px;top:305.1px;width:19.899999999999977px;height:9.8px;background:#000080"></div>
<div class="a" style="left:290.5px;top:315.1px;width:1px;height:52.599999999999966px;background:#dadada"></div>
<div class="a" style="left:293.9px;top:316.3px;width:16.600000000000023px;height:50.39999999999998px;box-sizing:border-box;border-left:1px solid #b8b8b8;border-top:1px solid #c8c8c8;border-right:1px solid #c8c8c8;border-bottom:1px solid #d4d4d4"></div>
<div class="t" style="left:296.9px;top:331.49px;font-size:8.2px;line-height:10px;color:#141414;overflow:hidden;width:11.3px;letter-spacing:-0.3px;word-spacing:0.6px;">8 MB</div>
<div class="t" style="left:296.9px;top:342.29px;font-size:8.2px;line-height:10px;color:#141414;overflow:hidden;width:11.3px;">Healthy (Primary Partition)</div>
<div class="a" style="left:314.2px;top:305.1px;width:44.60000000000002px;height:9.8px;background:#000080"></div>
<div class="a" style="left:312.7px;top:315.1px;width:1px;height:52.599999999999966px;background:#dadada"></div>
<div class="a" style="left:316.09999999999997px;top:316.3px;width:41.30000000000007px;height:50.39999999999998px;box-sizing:border-box;border-left:1px solid #b8b8b8;border-top:1px solid #c8c8c8;border-right:1px solid #c8c8c8;border-bottom:1px solid #d4d4d4"></div>
<div class="t" style="left:319.09999999999997px;top:331.49px;font-size:8.2px;line-height:10px;color:#141414;overflow:hidden;width:36.0px;letter-spacing:-0.3px;word-spacing:0.6px;">96 MB</div>
<div class="t" style="left:319.09999999999997px;top:342.29px;font-size:8.2px;line-height:10px;color:#141414;overflow:hidden;width:36.0px;">Healthy (Primary Partition)</div>
<div class="a" style="left:360.7px;top:305.1px;width:89.5px;height:9.8px;background:#000080"></div>
<div class="a" style="left:359.2px;top:315.1px;width:1px;height:52.599999999999966px;background:#dadada"></div>
<div class="a" style="left:362.59999999999997px;top:316.3px;width:86.20000000000005px;height:50.39999999999998px;box-sizing:border-box;border-left:1px solid #b8b8b8;border-top:1px solid #c8c8c8;border-right:1px solid #c8c8c8;border-bottom:1px solid #d4d4d4"></div>
<div class="t" style="left:365.59999999999997px;top:331.49px;font-size:8.2px;line-height:10px;color:#141414;overflow:hidden;width:80.9px;letter-spacing:-0.3px;word-spacing:0.6px;">8.00 GB</div>
<div class="t" style="left:365.59999999999997px;top:342.29px;font-size:8.2px;line-height:10px;color:#141414;overflow:hidden;width:80.9px;">Healthy (Primary Partition)</div>
<div class="a" style="left:452.3px;top:305.1px;width:148.2px;height:9.8px;background:#000080"></div>
<div class="a" style="left:450.8px;top:315.1px;width:1px;height:51.5px;background:#dadada"></div>
<svg class="a" style="left:451px;top:315px" width="151" height="53" viewBox="0 0 151 53"><defs><pattern id="hp" patternUnits="userSpaceOnUse" width="3" height="3"><rect width="3" height="3" fill="#fff"/><path d="M-0.75 0.75 L0.75 -0.75 M0 3 L3 0 M2.25 3.75 L3.75 2.25" stroke="#dcdcdc" stroke-width="0.8"/></pattern></defs><rect x="0" y="0" width="151" height="53" fill="#c6c6c6"/><rect x="0.5" y="0" width="150" height="1.6" fill="#d8d8d8"/><rect x="3" y="2" width="145.5" height="47.5" fill="url(#hp)"/></svg>
<div class="t" style="left:457.2px;top:320.99px;font-size:8.2px;line-height:10px;color:#141414;font-weight:bold;color:#000;-webkit-text-stroke:0.3px #000;letter-spacing:-0.1px;background:#fff;padding-right:1px;">DVR&nbsp; (P:)</div>
<div class="t" style="left:457.2px;top:331.49px;font-size:8.2px;line-height:10px;color:#141414;letter-spacing:-0.3px;word-spacing:0.6px;background:#fff;padding-right:1px;">1854.30 GB exFAT</div>
<div class="t" style="left:457.2px;top:341.99px;font-size:8.2px;line-height:10px;color:#141414;background:#fff;padding-right:1px;">Healthy (Primary Partition)</div>
<div class="a" style="left:603.5px;top:301px;width:1px;height:67px;background:#e0e0e0"></div>
<div class="a" style="left:604.5px;top:301px;width:10px;height:67px;background:#f0f0f0"></div>
<svg class="a" style="left:606.5px;top:363.5px" width="5" height="4" viewBox="0 0 5 4"><path d="M0.5 0.8 L2.5 2.8 L4.5 0.8" stroke="#444" stroke-width="0.8" fill="none"/></svg>
<div class="a" style="left:3px;top:371px;width:611px;height:1px;background:#fafafa"></div>
<div class="a" style="left:3px;top:372px;width:611px;height:13px;background:#f0f0f0"></div>
<div class="a" style="left:3px;top:385px;width:611px;height:1px;background:#c4c4c4"></div>
<div class="a" style="left:614px;top:372px;width:1px;height:14px;background:#d0d0d0"></div>
<div class="a" style="left:7px;top:374.4px;width:7.4px;height:8.8px;background:#000"></div>
<div class="t" style="left:17.4px;top:374.30px;font-size:8.3px;line-height:10px;color:#141414">Unallocated</div>
<div class="a" style="left:63.8px;top:374.4px;width:7px;height:8.8px;background:#000080"></div>
<div class="t" style="left:74.2px;top:374.30px;font-size:8.4px;line-height:10px;color:#141414">Primary partition</div>
<div class="a" style="left:2px;top:386px;width:613px;height:1px;background:#fafafa"></div>
<div class="a" style="left:2px;top:387px;width:613px;height:14.5px;background:#f0f0f0"></div>
<div class="a" style="left:468px;top:387px;width:1px;height:14px;background:#dcdcdc"></div>
<div class="a" style="left:558px;top:387px;width:1px;height:14px;background:#dcdcdc"></div>
<div class="a" style="left:615px;top:386px;width:2px;height:16px;background:#fff"></div>
<svg class="a" style="left:617px;top:332px" width="63" height="70" viewBox="0 0 63 70">
<defs>
<filter id="tx" x="0" y="0" width="100%" height="100%">
<feTurbulence type="fractalNoise" baseFrequency="0.07 0.11" numOctaves="4" seed="11"/>
<feColorMatrix type="matrix" values="0 0 0 0 0.2  0 0 0 0 0.24  0 0 0 0 0.32  1.1 0 0 0 -0.55"/>
</filter>
<linearGradient id="dg" x1="0" y1="0" x2="1" y2="1"><stop offset="0" stop-color="#0a0b0f"/><stop offset="0.5" stop-color="#12151c"/><stop offset="1" stop-color="#08090c"/></linearGradient>
<linearGradient id="topd" x1="0" y1="0" x2="0" y2="1"><stop offset="0" stop-color="#050608" stop-opacity="0.85"/><stop offset="1" stop-color="#050608" stop-opacity="0"/></linearGradient>
</defs>
<rect width="63" height="70" fill="url(#dg)"/>
<rect width="63" height="70" filter="url(#tx)"/>
<rect width="63" height="30" fill="url(#topd)"/>
</svg>
<div class="a" style="left:528.4px;top:162.2px;width:152.20000000000005px;height:169.90000000000003px;background:rgba(0,0,0,0.06);filter:blur(1.5px)"></div>
<div class="a" style="left:527.4px;top:161.2px;width:152.20000000000005px;height:169.90000000000003px;box-sizing:border-box;background:#f0f0f0;border:1px solid #e4e4e4"></div>
<div class="t" style="left:550.8px;top:166.60px;font-size:8.5px;line-height:10px;letter-spacing:-0.1px;transform:scaleX(0.915);transform-origin:0 0;-webkit-text-stroke:0.1px currentColor;color:#111">Open</div>
<div class="t" style="left:550.8px;top:181.40px;font-size:8.5px;line-height:10px;letter-spacing:-0.1px;transform:scaleX(0.915);transform-origin:0 0;-webkit-text-stroke:0.1px currentColor;color:#111">Explore</div>
<div class="t" style="left:550.8px;top:200.60px;font-size:8.5px;line-height:10px;letter-spacing:-0.1px;transform:scaleX(0.915);transform-origin:0 0;-webkit-text-stroke:0.1px currentColor;color:#8c8c8c">Mark Partition as Active</div>
<div class="t" style="left:550.8px;top:215.40px;font-size:8.5px;line-height:10px;letter-spacing:-0.1px;transform:scaleX(0.915);transform-origin:0 0;-webkit-text-stroke:0.1px currentColor;color:#111">Change Drive Letter and Paths...</div>
<div class="t" style="left:550.8px;top:230.10px;font-size:8.5px;line-height:10px;letter-spacing:-0.1px;transform:scaleX(0.915);transform-origin:0 0;-webkit-text-stroke:0.1px currentColor;color:#111">Format...</div>
<div class="t" style="left:550.8px;top:249.90px;font-size:8.5px;line-height:10px;letter-spacing:-0.1px;transform:scaleX(0.915);transform-origin:0 0;-webkit-text-stroke:0.1px currentColor;color:#8c8c8c">Extend Volume...</div>
<div class="t" style="left:550.8px;top:264.70px;font-size:8.5px;line-height:10px;letter-spacing:-0.1px;transform:scaleX(0.915);transform-origin:0 0;-webkit-text-stroke:0.1px currentColor;color:#8c8c8c">Shrink Volume...</div>
<div class="t" style="left:550.8px;top:279.40px;font-size:8.5px;line-height:10px;letter-spacing:-0.1px;transform:scaleX(0.915);transform-origin:0 0;-webkit-text-stroke:0.1px currentColor;color:#111">Delete Volume...</div>
<div class="t" style="left:550.8px;top:299.10px;font-size:8.5px;line-height:10px;letter-spacing:-0.1px;transform:scaleX(0.915);transform-origin:0 0;-webkit-text-stroke:0.1px currentColor;color:#111">Properties</div>
<div class="t" style="left:550.8px;top:318.40px;font-size:8.5px;line-height:10px;letter-spacing:-0.1px;transform:scaleX(0.915);transform-origin:0 0;-webkit-text-stroke:0.1px currentColor;color:#111">Help</div>
<div class="a" style="left:548px;top:193.9px;width:130.60000000000002px;height:1px;background:#dcdcdc"></div>
<div class="a" style="left:548px;top:242.8px;width:130.60000000000002px;height:1px;background:#dcdcdc"></div>
<div class="a" style="left:548px;top:292.2px;width:130.60000000000002px;height:1px;background:#dcdcdc"></div>
<div class="a" style="left:548px;top:312.7px;width:130.60000000000002px;height:1px;background:#dcdcdc"></div>
</body></html>
